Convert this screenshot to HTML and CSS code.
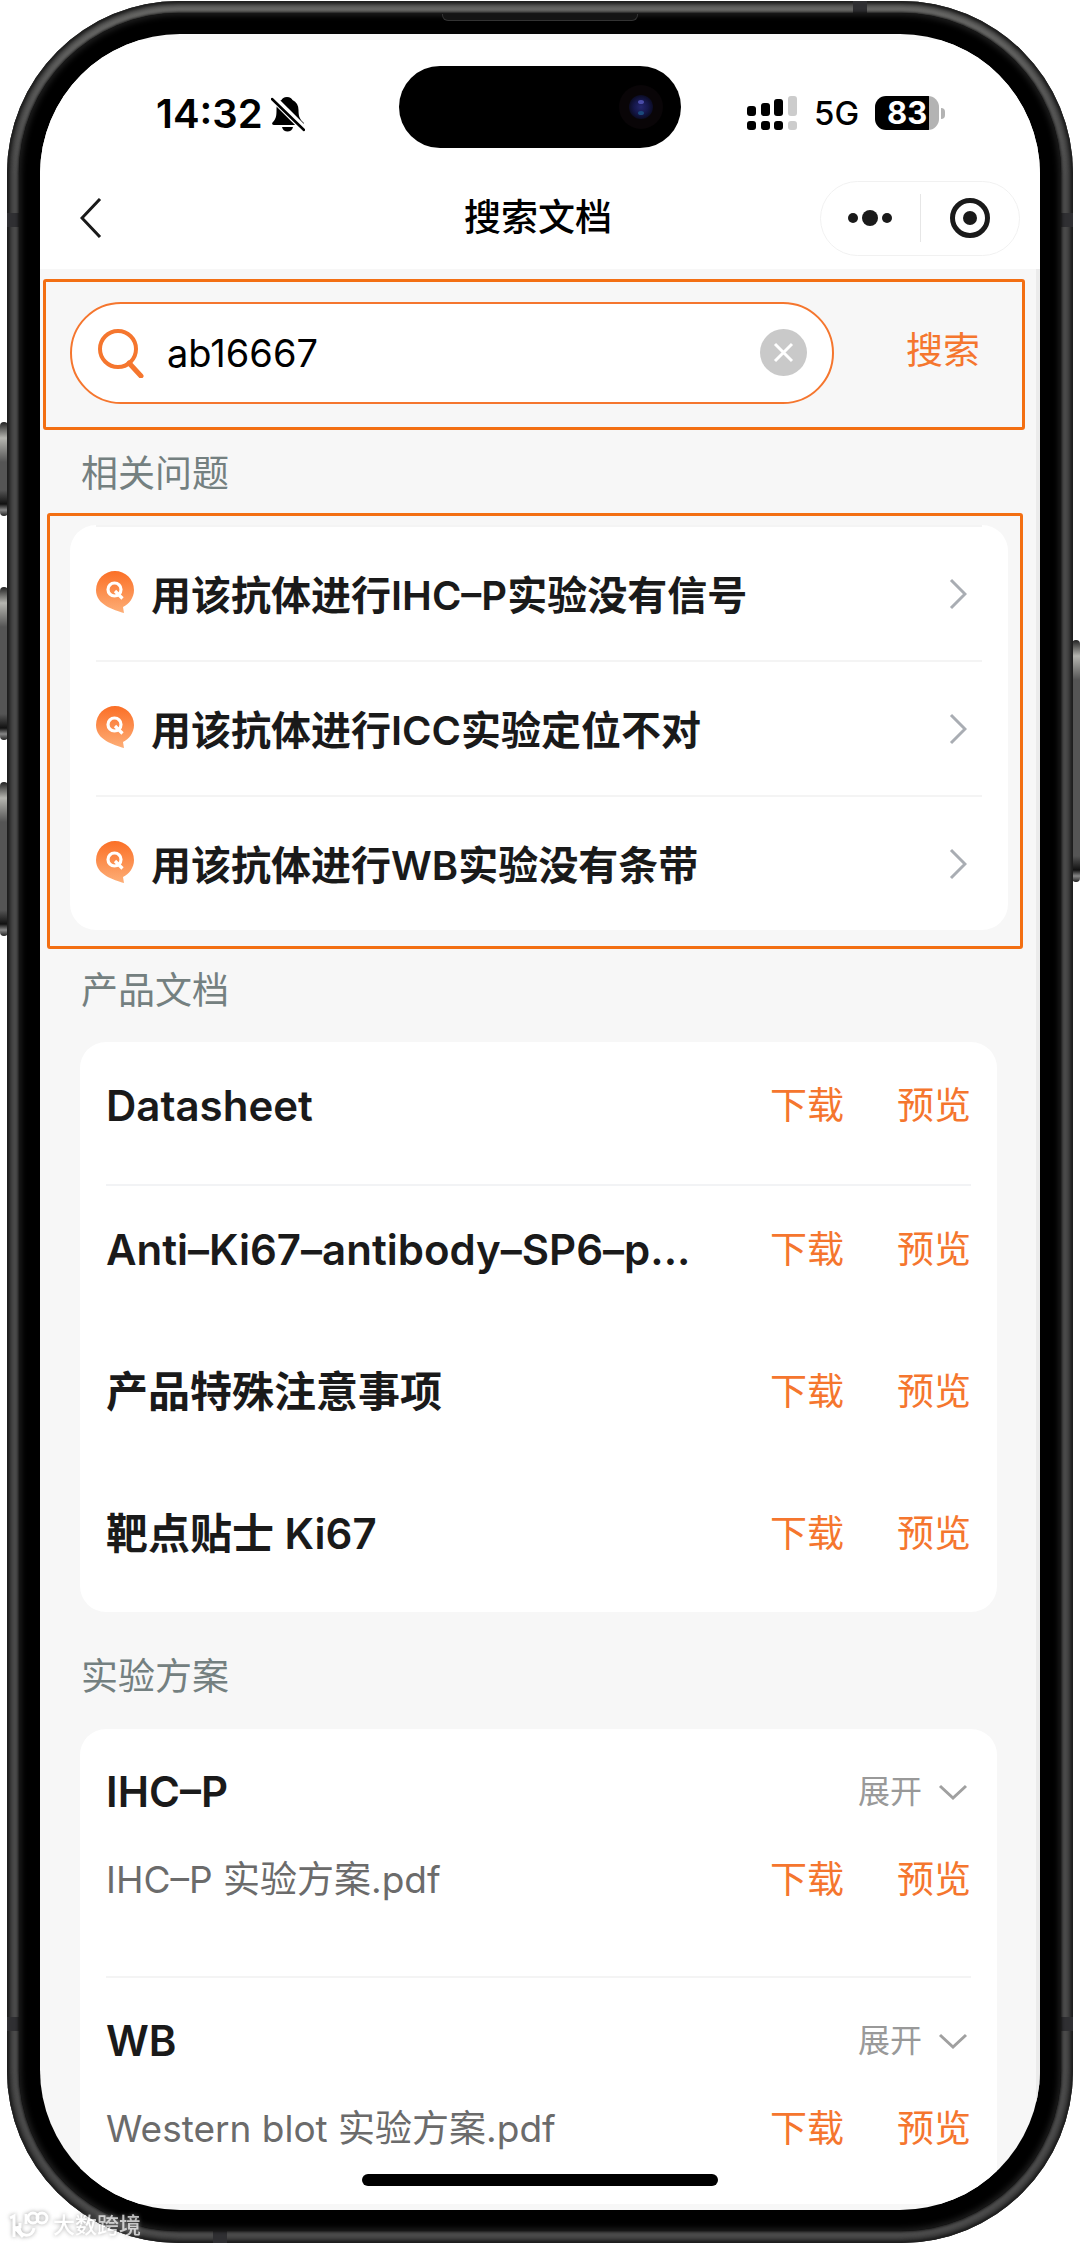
FILE: index.html
```html
<!DOCTYPE html>
<html lang="zh-CN">
<head>
<meta charset="utf-8">
<meta name="viewport" content="width=device-width, initial-scale=1">
<title>搜索文档</title>
<link rel="stylesheet" href="styles.css">
</head>
<body>
<svg class="defs" aria-hidden="true">
  <defs>
    <linearGradient id="bubble" x1="0" y1="0" x2="0" y2="1">
      <stop offset="0" stop-color="#fb6f26"/><stop offset="1" stop-color="#fdae77"/>
    </linearGradient>
    <radialGradient id="lens">
      <stop offset="0" stop-color="#23266e"/><stop offset=".6" stop-color="#15174a"/><stop offset="1" stop-color="#0b0c24"/>
    </radialGradient>
    <symbol id="q" viewBox="0 0 38 42">
      <path d="M19 0a19 19 0 0 1 19 19c0 8-5 14-11 17l1 6C18 39 0 34 0 19A19 19 0 0 1 19 0z" fill="url(#bubble)"/>
      <circle cx="18.500" cy="18.500" r="6.500" fill="none" stroke="#fff" stroke-width="3.200"/>
      <path d="M19 20l7.500 7.500" stroke="#fff" stroke-width="3.200"/>
    </symbol>
    <symbol id="right" viewBox="0 0 18 32">
      <path d="M2 2l14 14L2 30" fill="none" stroke="#a9adb3" stroke-width="3"/>
    </symbol>
    <symbol id="down" viewBox="0 0 30 18">
      <path d="M2 3l13 12L28 3" fill="none" stroke="#a0a0a0" stroke-width="3"/>
    </symbol>
  </defs>
</svg>
<div class="device">
  <span class="key key-action"></span>
  <span class="key key-up"></span>
  <span class="key key-down"></span>
  <span class="key key-power"></span>
  <div class="frame">
    <span class="band band-left-top"></span>
    <span class="band band-left-bottom"></span>
    <span class="band band-right-top"></span>
    <span class="band band-right-bottom"></span>
    <span class="band band-top"></span>
    <span class="band band-bottom"></span>
    <div class="bezel">
      <span class="earpiece"></span>
      <div class="screen">
        <header class="top">
          <div class="status">
            <div class="status-left">
              <span class="time">14:32</span>
              <svg width="34" height="36" viewBox="0 0 34 36">
                <path d="M16 1c3 0 5 1.500 5.500 3 4 2 6 5.500 6 10 0 6 1 9 5 12.500 1 1.500 0 2.500-1.500 2.500H3c-1.500 0-2.500-1-1.500-2.500C5 23 5.500 20 5.500 14c0-4.500 1-8 5-10C11 2.500 13 1 16 1z"/>
                <path d="M11 31h11c-1 6-10 6-11 0z"/>
                <path d="M0 0l34 34" stroke="#fff" stroke-width="7"/>
                <path d="M1 3l32 31" stroke="#000" stroke-width="2.500" stroke-linecap="round"/>
              </svg>
            </div>
            <svg class="island" width="282" height="82" viewBox="0 0 282 82">
              <rect width="282" height="82" rx="41"/>
              <circle cx="242" cy="41" r="22" fill="#090507"/>
              <circle cx="242" cy="41" r="12" fill="url(#lens)"/>
              <ellipse cx="242" cy="36" rx="3" ry="2" fill="#4a4ca8"/>
              <ellipse cx="242" cy="47" rx="3" ry="2" fill="#1b4a7c"/>
            </svg>
            <div class="status-right">
              <svg width="50" height="34" viewBox="0 0 50 34">
                <rect y="10" width="9" height="10" rx="3"/><rect x="14" y="7" width="9" height="13" rx="3"/><rect x="27" y="3" width="9" height="17" rx="3"/>
                <rect y="25" width="9" height="9" rx="3"/><rect x="14" y="25" width="9" height="9" rx="3"/><rect x="27" y="25" width="9" height="9" rx="3"/>
                <g fill="#ccc"><rect x="41" width="9" height="20" rx="3"/><rect x="41" y="25" width="9" height="9" rx="3"/></g>
              </svg>
              <span class="network">5G</span>
              <span class="battery">83</span>
            </div>
          </div>
          <div class="nav">
            <button class="back" type="button" aria-label="返回">
              <svg width="22" height="40" viewBox="0 0 22 40"><path d="M20 1L2 20l18 19" fill="none" stroke="#1a1a1a" stroke-width="3"/></svg>
            </button>
            <h1 class="title">搜索文档</h1>
            <div class="capsule">
              <button type="button" aria-label="更多">
                <svg width="44" height="16" viewBox="0 0 44 16" fill="#1a1a1a"><circle cx="5" cy="8" r="5"/><circle cx="22" cy="8" r="8"/><circle cx="39" cy="8" r="5"/></svg>
              </button>
              <button type="button" aria-label="关闭">
                <svg width="40" height="40" viewBox="0 0 40 40"><circle cx="20" cy="20" r="17.500" fill="none" stroke="#1a1a1a" stroke-width="5"/><circle cx="20" cy="20" r="7" fill="#1a1a1a"/></svg>
              </button>
            </div>
          </div>
        </header>
        <main class="content">
          <form class="search">
            <label class="field">
              <svg width="46" height="50" viewBox="0 0 46 50" fill="none" stroke="#f5762e" stroke-width="4"><circle cx="20" cy="21" r="18"/><path d="M31 35l12 13" stroke-width="5" stroke-linecap="round"/></svg>
              <input type="text" value="ab16667" aria-label="搜索">
              <button class="clear" type="button" aria-label="清除">
                <svg width="47" height="47" viewBox="0 0 47 47"><circle cx="23.500" cy="23.500" r="23.500" fill="#c9c9c9"/><path d="M15 15l17 17M32 15L15 32" stroke="#fff" stroke-width="3"/></svg>
              </button>
            </label>
            <button class="link submit" type="submit">搜索</button>
          </form>

          <h2 class="label">相关问题</h2>
          <section class="questions">
            <ul class="card">
              <li><a href="#ihc"><svg class="q" width="38" height="42"><use href="#q"/></svg><span>用该抗体进行IHC–P实验没有信号</span><svg width="18" height="32"><use href="#right"/></svg></a></li>
              <li><a href="#icc"><svg class="q" width="38" height="42"><use href="#q"/></svg><span>用该抗体进行ICC实验定位不对</span><svg width="18" height="32"><use href="#right"/></svg></a></li>
              <li><a href="#wb"><svg class="q" width="38" height="42"><use href="#q"/></svg><span>用该抗体进行WB实验没有条带</span><svg width="18" height="32"><use href="#right"/></svg></a></li>
            </ul>
          </section>

          <h2 class="label label-docs">产品文档</h2>
          <ul class="card docs">
            <li><span class="name">Datasheet</span><button class="link" type="button">下载</button><button class="link" type="button">预览</button></li>
            <li><span class="name">Anti–Ki67–antibody–SP6–p...</span><button class="link" type="button">下载</button><button class="link" type="button">预览</button></li>
            <li><span class="name">产品特殊注意事项</span><button class="link" type="button">下载</button><button class="link" type="button">预览</button></li>
            <li><span class="name">靶点贴士 Ki67</span><button class="link" type="button">下载</button><button class="link" type="button">预览</button></li>
          </ul>

          <h2 class="label label-plans">实验方案</h2>
          <div class="card plans">
            <section class="plan">
              <div class="row"><h3 class="name">IHC–P</h3><button class="expand" type="button">展开<svg width="30" height="18"><use href="#down"/></svg></button></div>
              <div class="row"><span class="file">IHC–P 实验方案.pdf</span><button class="link" type="button">下载</button><button class="link" type="button">预览</button></div>
            </section>
            <section class="plan">
              <div class="row"><h3 class="name">WB</h3><button class="expand" type="button">展开<svg width="30" height="18"><use href="#down"/></svg></button></div>
              <div class="row"><span class="file">Western blot 实验方案.pdf</span><button class="link" type="button">下载</button><button class="link" type="button">预览</button></div>
            </section>
          </div>
        </main>
        <span class="home"></span>
      </div>
    </div>
  </div>
  <div class="watermark">
    <svg width="40" height="28" viewBox="0 0 40 28" fill="none" stroke="#fff" stroke-width="3">
      <path d="M1 7l4-2v21M11 12v4l-5 1 8 9M10 15c0 12 14 12 15 2"/><path d="M17 3v10" /><circle cx="24" cy="7" r="5"/><circle cx="33" cy="7" r="5"/>
    </svg>
    <span>大数跨境</span>
  </div>
</div>
</body>
</html>
```
FILE: styles.css
```css
* { box-sizing: border-box; }

body {
  margin: 0;
  background: #fff;
  color: #1a1a1a;
  font-family: Inter, "Noto Sans CJK SC", sans-serif;
  font-size: 37px;
  line-height: 52px;
}

h1, h2, h3, ul { margin: 0; padding: 0; font-weight: 400; font-size: inherit; }
ul { list-style: none; }
svg { display: block; flex: none; }
.defs { position: absolute; width: 0; height: 0; }

button, input {
  margin: 0;
  padding: 0;
  border: 0;
  background: none;
  color: inherit;
  font: inherit;
}

/* Phone body */
.device { position: relative; padding: 1px 7px 0; }

.frame {
  position: relative;
  padding: 12px;
  border-radius: 172px;
  background: linear-gradient(#70706e, #505050 8%, #505050 92%, #505050);
  box-shadow: inset 0 0 3px 2px #1c1c1c, inset 0 0 6px 4px #2a2a2a;
}

.bezel {
  position: relative;
  padding: 21px;
  border-radius: 160px;
  background: #000;
  box-shadow: 0 0 3px 1px #111, inset 0 0 6px 2px #222;
}

.screen {
  position: relative;
  overflow: hidden;
  padding: 6px 0;
  border-radius: 140px;
  background: #f7f7f7;
}

.key {
  position: absolute;
  width: 8px;
  border-radius: 4px;
  background: linear-gradient(#222, #b5b5b0 16px, #555 40px, #555 calc(100% - 26px), #111 calc(100% - 12px), #888 calc(100% - 6px), #222);
}
.key-action { left: 0; top: 422px; height: 94px; }
.key-up { left: 0; top: 587px; height: 153px; }
.key-down { left: 0; top: 782px; height: 154px; }
.key-power { right: 0; top: 640px; height: 242px; }

.band { position: absolute; background: #2f2f32; }
.band-left-top, .band-left-bottom { left: 0; width: 12px; height: 14px; }
.band-right-top, .band-right-bottom { right: 0; width: 12px; height: 14px; }
.band-left-top, .band-right-top { top: 212px; }
.band-left-bottom, .band-right-bottom { bottom: 212px; }
.band-top { top: 0; right: 206px; width: 14px; height: 12px; }
.band-bottom { bottom: 0; left: 206px; width: 14px; height: 12px; }

.earpiece {
  position: absolute;
  top: 1px;
  left: 50%;
  width: 196px;
  height: 7px;
  margin-left: -98px;
  border: 1px solid #333;
  border-top: 0;
  border-radius: 0 0 6px 6px;
  background: #141414;
}

/* Status bar and navigation */
.top { background: #fff; }

.status {
  display: grid;
  grid-template-columns: 1fr 282px 1fr;
  align-items: center;
  height: 134px;
  color: #000;
}
.status-left { display: flex; align-items: center; gap: 8px; padding: 14px 0 0 116px; }
.time { font-size: 40px; font-weight: 600; }
.status-right { display: flex; align-items: center; padding: 12px 0 0 66px; }
.network { margin: 0 16px 0 17px; font-size: 33px; font-weight: 500; line-height: 34px; }

.battery {
  position: relative;
  width: 64px;
  height: 34px;
  border-radius: 11px;
  background: linear-gradient(90deg, #000 54px, #b3b3b3 54px);
  color: #fff;
  font-size: 31px;
  font-weight: 700;
  line-height: 34px;
  text-align: center;
}
.battery::after {
  content: "";
  position: absolute;
  left: 66px;
  top: 12px;
  width: 4px;
  height: 11px;
  border-radius: 0 5px 5px 0;
  background: #b3b3b3;
}

.nav {
  display: grid;
  grid-template-columns: 1fr auto 1fr;
  align-items: center;
  height: 95px;
  padding: 0 20px 7px 40px;
}
.back { justify-self: start; }
.title { padding-right: 24px; font-size: 37px; font-weight: 500; color: #000; }
.capsule {
  display: flex;
  justify-self: end;
  align-items: center;
  width: 200px;
  height: 75px;
  border: 1px solid #f1f1f1;
  border-radius: 38px;
}
.capsule button { display: flex; flex: 1; align-items: center; justify-content: center; height: 48px; }
.capsule button + button { border-left: 1px solid #e6e6e6; }

/* Page content */
.content {
  padding: 10px 11px 0 3px;
  border-right: 4px solid #ebebeb;
}

.search {
  display: flex;
  align-items: center;
  height: 151px;
  padding: 0 42px 0 24px;
  border: 3px solid #f36f13;
  border-radius: 3px;
}
.field {
  display: flex;
  flex: 1;
  align-items: center;
  min-width: 0;
  height: 102px;
  margin-bottom: 4px;
  padding: 0 25px 0 26px;
  border: 2px solid #f5762e;
  border-radius: 51px;
  background: #fff;
}
.field input { flex: 1; min-width: 0; padding-left: 23px; color: #000; font-size: 38px; outline: 0; }
.link { flex: none; color: #f5762e; white-space: nowrap; }
.submit { margin: 0 0 8px 72px; }

.label { padding: 18px 0 13px 38px; color: #748080; }

.questions {
  margin: 0 2px 0 4px;
  padding: 9px 12px 16px 20px;
  border: 3px solid #f36f13;
  border-radius: 3px;
}
.card { padding: 0 26px; border-radius: 26px; background: #fff; }
.questions li { border-top: 2px solid #f4f4f4; }
.questions a {
  display: flex;
  align-items: center;
  height: 133px;
  padding-right: 15px;
  color: inherit;
  font-size: 40px;
  font-weight: 600;
  text-decoration: none;
}
.questions span { flex: 1; padding: 4px 0 0 17px; }
.q { margin-bottom: 3px; }

.label-docs { padding: 16px 0 25px 38px; }
.docs, .plans { margin: 0 28px 0 37px; }
.docs li { display: flex; align-items: center; padding: 38px 0 52px; }
.docs li:first-child { border-bottom: 2px solid #f2f3f5; }
.name { flex: 1; min-width: 0; font-size: 42px; font-weight: 600; white-space: nowrap; }
.link + .link { margin-left: 53px; }

.label-plans { padding: 39px 0 26px 38px; }
.plans { padding-bottom: 49px; border-radius: 26px 26px 0 0; }
.plan { display: grid; gap: 36px; padding: 37px 0 70px; }
.plan + .plan { padding-bottom: 0; border-top: 2px solid #f4f4f4; }
.row { display: flex; align-items: center; }
.file { flex: 1; color: #6b6b6b; }
.expand { display: flex; align-items: center; gap: 16px; padding-right: 3px; color: #999; font-size: 32px; }

.home {
  position: absolute;
  bottom: 24px;
  left: 50%;
  width: 356px;
  height: 12px;
  margin-left: -178px;
  border-radius: 6px;
  background: #000;
}

.watermark {
  position: absolute;
  bottom: 4px;
  left: 9px;
  display: flex;
  align-items: center;
  gap: 4px;
  opacity: .75;
  color: #fff;
  font-size: 22px;
  font-weight: 500;
  line-height: 28px;
  filter: drop-shadow(0 0 2px #888);
}
```
